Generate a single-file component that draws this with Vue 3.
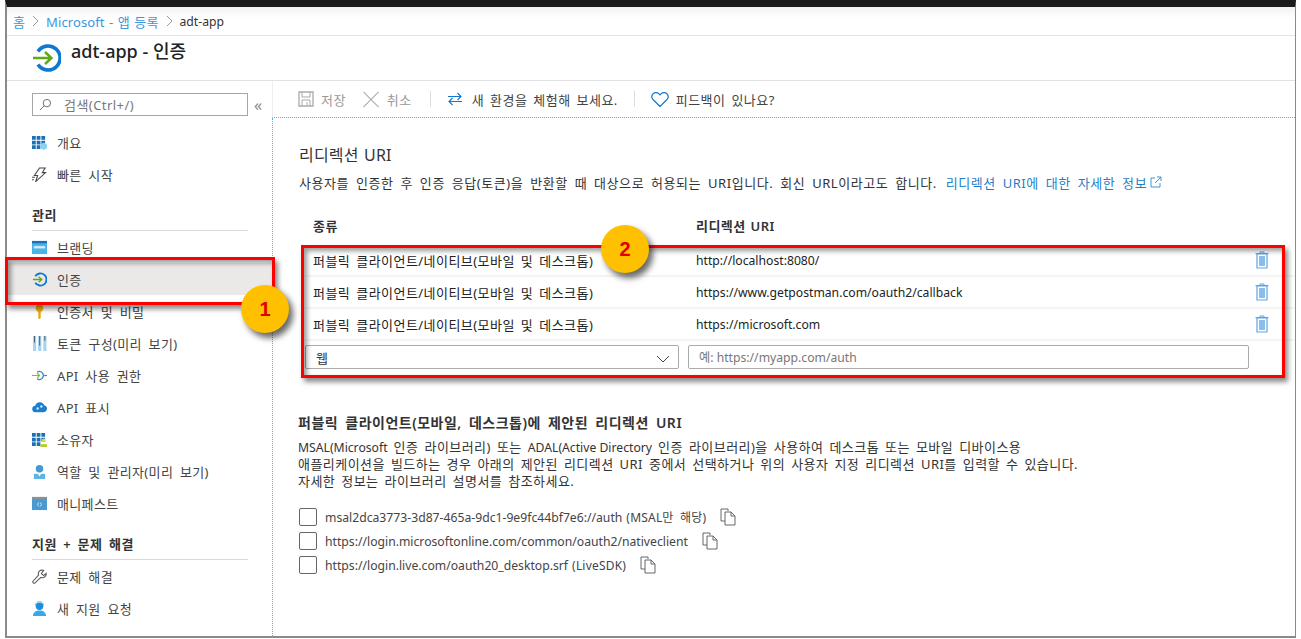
<template>
  <div class="frame">
    <div class="crumbs">
      <a>홈</a>
      <svg class="sep" viewBox="0 0 7 12"><path d="M1 1l5 5-5 5" fill="none" stroke="#999" /></svg>
      <a>Microsoft - 앱 등록</a>
      <svg class="sep" viewBox="0 0 7 12"><path d="M1 1l5 5-5 5" fill="none" stroke="#999" /></svg>
      <span class="en">adt-app</span>
    </div>

    <header class="title-bar">
      <svg class="logo" viewBox="0 0 28 28">
        <path d="M5 7.500A12 12 0 1 1 5 20.500" fill="none" stroke="#0f78d0" stroke-width="3.600" />
        <path d="M0 14h18M12 8l6.500 6-6.500 6" fill="none" stroke="#5ea81b" stroke-width="2.400" />
      </svg>
      <h1>adt-app - 인증</h1>
    </header>

    <div class="body">
      <aside class="sidebar">
        <div class="search-row">
          <div class="search">
            <svg viewBox="0 0 14 14" class="search-icon">
              <circle cx="8.500" cy="5.500" r="4" fill="none" stroke="#666" />
              <path d="M5.600 8.400 1 13" stroke="#666" fill="none" />
            </svg>
            <span>검색(Ctrl+/)</span>
          </div>
          <span class="collapse">«</span>
        </div>

        <template v-for="item in nav" :key="item.label">
          <div v-if="item.group" class="group">{{ item.label }}</div>
          <div v-else class="nav-item" :class="{ active: item.active }">
            <svg class="nav-icon" viewBox="0 0 16 16" v-html="item.icon"></svg>
            <span>{{ item.label }}</span>
          </div>
        </template>
      </aside>

      <main class="main">
        <div class="toolbar">
          <span class="tool disabled">
            <svg viewBox="0 0 16 16" class="tool-icon">
              <path d="M1 1h14v14H1z" fill="none" stroke="#aaa" stroke-width="1.300" />
              <path d="M4 1v5h8V1M4 15v-6h8v6M9 11v3" fill="none" stroke="#aaa" />
            </svg>
            저장
          </span>
          <span class="tool disabled">
            <svg viewBox="0 0 18 18" class="tool-icon wide">
              <path d="M1 1l16 16M17 1 1 17" stroke="#aaa" stroke-width="1.100" fill="none" />
            </svg>
            취소
          </span>
          <i class="tool-sep"></i>
          <span class="tool try">
            <svg viewBox="0 0 16 16" class="tool-icon">
              <path d="M1 5.500h13M10.500 2l3.500 3.500L10.500 9" fill="none" stroke="#0f78d0" stroke-width="1.100" />
              <path d="M15 10.500H2M5.500 7 2 10.500 5.500 14" fill="none" stroke="#0f78d0" stroke-width="1.100" />
            </svg>
            새 환경을 체험해 보세요.
          </span>
          <i class="tool-sep"></i>
          <span class="tool">
            <svg viewBox="0 0 18 16" class="tool-icon wide">
              <path d="M9 15 2 8a4.200 4.200 0 0 1 0-5.600 4.200 4.200 0 0 1 6 0l1 1 1-1a4.200 4.200 0 0 1 6 0 4.200 4.200 0 0 1 0 5.600z" fill="none" stroke="#0f78d0" stroke-width="1.200" />
            </svg>
            피드백이 있나요?
          </span>
        </div>

        <section class="content">
          <h2>리디렉션 URI</h2>
          <p class="intro">
            사용자를 인증한 후 인증 응답(토큰)을 반환할 때 대상으로 허용되는 URI입니다. 회신 URL이라고도 합니다.
            <a>리디렉션 URI에 대한 자세한 정보</a>
            <svg viewBox="0 0 12 12" class="ext">
              <path d="M5 2H1v9h9V7M7 1h4v4M11 1 5 7" fill="none" stroke="#3a96dd" />
            </svg>
          </p>

          <div class="uri-table">
            <div class="uri-head">
              <span class="col-type">종류</span>
              <span class="col-uri">리디렉션 URI</span>
            </div>
            <div v-for="uri in uris" :key="uri" class="uri-row">
              <span class="col-type">퍼블릭 클라이언트/네이티브(모바일 및 데스크톱)</span>
              <span class="col-uri en">{{ uri }}</span>
              <svg class="trash" viewBox="0 0 14 18">
                <path d="M5 2.500V1h4v1.500M0.500 2.500h13" fill="none" stroke="#5ba4e6" />
                <path d="M2 3h10v14H2z" fill="#fff" stroke="#5ba4e6" stroke-width="1.200" />
                <path d="M4 5h6v10H4z" fill="#8cbdea" />
              </svg>
            </div>
            <div class="uri-add">
              <div class="select">
                <span>웹</span>
                <svg viewBox="0 0 14 8" class="chev"><path d="M1 1l6 6 6-6" fill="none" stroke="#444" /></svg>
              </div>
              <div class="input en">예: https://myapp.com/auth</div>
            </div>
          </div>

          <h3>퍼블릭 클라이언트(모바일, 데스크톱)에 제안된 리디렉션 URI</h3>
          <p class="note">
            <span class="en">MSAL(Microsoft</span> 인증 라이브러리) 또는 <span class="en">ADAL(Active Directory</span> 인증 라이브러리)을 사용하여 데스크톱 또는 모바일 디바이스용<br />
            애플리케이션을 빌드하는 경우 아래의 제안된 리디렉션 URI 중에서 선택하거나 위의 사용자 지정 리디렉션 URI를 입력할 수 있습니다.<br />
            자세한 정보는 라이브러리 설명서를 참조하세요.
          </p>

          <div class="suggest">
            <label v-for="s in suggested" :key="s.url" class="suggest-row">
              <i class="check"></i>
              <span class="en">{{ s.url }}</span>
              <small v-if="s.tag">{{ s.tag }}</small>
              <svg class="copy" viewBox="0 0 16 18">
                <path d="M5 13H1V1h7v2" fill="none" stroke="#666" />
                <path d="M5 4h6l4 4v9H5z" fill="#fff" stroke="#666" />
                <path d="M11 4v4h4" fill="none" stroke="#666" />
              </svg>
            </label>
          </div>
        </section>
      </main>
    </div>

    <div class="callout box-one"></div>
    <div class="callout box-two"></div>
    <div class="badge badge-one">1</div>
    <div class="badge badge-two">2</div>
  </div>
</template>

<script setup>
const ring = '<path d="M3.500 4.500a6.500 6.500 0 1 1 0 7" fill="none" stroke="#0f78d0" stroke-width="2"/><path d="M1 8h9M7 5l3.500 3L7 11" fill="none" stroke="#5ea81b" stroke-width="1.400"/>'
const grid = c => `<path d="M0 1h4v4H0zM5 1h4v4H5zM10 1h4v4h-4zM0 6h4v4H0zM5 6h4v4H5zM10 6h4v4h-4zM0 11h4v4H0zM5 11h4v4H5z" fill="#1c70b8"/>${c}`

const nav = [
  { label: '개요', icon: grid('<path d="M9 10l3.500-2 3.500 2v4l-3.500 2L9 14z" fill="#8fd0ee"/>') },
  { label: '빠른 시작', icon: '<path d="M8 1h6l-3 5h3.500L4 15.500 6 9H2.500zM0 11h3M0 13.500h2" fill="none" stroke="#444" stroke-width="1.100"/>' },
  { label: '관리', group: true },
  { label: '브랜딩', icon: '<path d="M0 1h16v14H0z" fill="#4db1ea"/><path d="M0 1h16v2.500H0z" fill="#1a6fb5"/><path d="M2 6.500h12v2.500H2z" fill="#d6effb"/>' },
  { label: '인증', icon: ring, active: true },
  { label: '인증서 및 비밀', icon: '<circle cx="8" cy="4.500" r="4" fill="#f2b411"/><path d="M6.700 7h2.600v8L8 16.500 6.700 15z" fill="#e8a90c"/>' },
  { label: '토큰 구성(미리 보기)', icon: '<path d="M1 0h3.500v16H1zM6.500 0H10v16H6.500zM12 0h3.500v16H12z" fill="#a9d4f0"/><path d="M2.200 0h1v7h-1zM7.700 0h1v10h-1zM13.200 0h1v5h-1z" fill="#4c5a65"/>' },
  { label: 'API 사용 권한', icon: '<path d="M0 8h8M5.500 5.500 8 8l-2.500 2.500" fill="none" stroke="#7fba3a" stroke-width="1.300"/><path d="M5.500 4.500a4.200 4.200 0 1 1 0 7" fill="none" stroke="#2a86cf" stroke-width="1.400"/><path d="M13 8h3" stroke="#2a86cf" stroke-width="1.300"/>' },
  { label: 'API 표시', icon: '<path d="M4 13a3.500 3.500 0 0 1-.5-7 5 5 0 0 1 9.500-.5A3.800 3.800 0 0 1 12.500 13z" fill="#1b7fd0"/><circle cx="6" cy="9" r="1.300" fill="#cfe9fa"/><circle cx="10" cy="7" r="1.300" fill="#cfe9fa"/>' },
  { label: '소유자', icon: grid('<circle cx="12.500" cy="9" r="2" fill="#d3dd35"/><path d="M9 16v-3h7v3z" fill="#b7cc2c"/>') },
  { label: '역할 및 관리자(미리 보기)', icon: '<circle cx="8" cy="5" r="4" fill="#3f9ad6"/><path d="M2 16V10.500h12V16z" fill="#5eb5e3"/><path d="M6 10.500h4L8 13z" fill="#fff"/>' },
  { label: '매니페스트', icon: '<path d="M0 1h16v14H0z" fill="#4b99d1"/><path d="M0 1h16v2.500H0z" fill="#8a9198"/><path d="M7 7 6 9l1 2M9 7l1 2-1 2" fill="none" stroke="#fff" stroke-width=".8"/>' },
  { label: '지원 + 문제 해결', group: true },
  { label: '문제 해결', icon: '<path d="M10.500 1a4 4 0 0 0-3.500 5.500L1 13a1.500 1.500 0 0 0 2 2l6.500-6a4 4 0 0 0 5.500-4.500L12.500 7 10 5l2.500-3.500z" fill="none" stroke="#555" stroke-width="1.100"/>' },
  { label: '새 지원 요청', icon: '<circle cx="8" cy="5.500" r="4" fill="#1e8fdc"/><path d="M1 16c0-4 3-6 7-6s7 2 7 6z" fill="#38a9e8"/><path d="M3.500 5a4.500 4.500 0 0 1 9 0" fill="none" stroke="#6bc7c4"/>' }
]

const uris = [
  'http://localhost:8080/',
  'https://www.getpostman.com/oauth2/callback',
  'https://microsoft.com'
]

const suggested = [
  { url: 'msal2dca3773-3d87-465a-9dc1-9e9fc44bf7e6://auth', tag: '(MSAL만 해당)' },
  { url: 'https://login.microsoftonline.com/common/oauth2/nativeclient' },
  { url: 'https://login.live.com/oauth20_desktop.srf', tag: '(LiveSDK)' }
]
</script>

<style>
html, body { background: #fff; overflow: hidden; }
</style>

<style scoped>
.frame {
  position: relative;
  box-sizing: border-box;
  width: 1291px;
  height: 638px;
  margin-left: 5px;
  border: 2px solid #8a8a8a;
  border-top: 7px solid #1a1a1a;
  border-right-width: 1px;
  font-family: "Noto Sans", "Noto Sans CJK KR", sans-serif;
  font-size: 13px;
  letter-spacing: 0.45px;
  word-spacing: 2.200px;
  color: #333;
  background: #fff;
}

.en {
  font-size: 12.2px;
  letter-spacing: 0;
  word-spacing: 0;
}

.crumbs {
  display: flex;
  align-items: center;
  gap: 7px;
  height: 29px;
  box-sizing: border-box;
  padding-left: 6px;
  border-bottom: 1px solid #e4e4e4;
  background: linear-gradient(#f2f2f2, #fff 40%);
  letter-spacing: 0.1px;
  word-spacing: 1px;
}
.crumbs a { color: #3a96dd; }
.crumbs .sep { width: 7px; height: 12px; }

.title-bar {
  display: flex;
  align-items: center;
  gap: 10px;
  height: 45px;
  padding-left: 26px;
  border-bottom: 1px solid #e2e2e2;
  box-sizing: border-box;
}
.logo { width: 28px; height: 28px; margin-top: -1px; }
h1 {
  margin: -16px 0 0;
  font-size: 18px;
  font-weight: 500;
  letter-spacing: 0;
  word-spacing: 0;
  color: #222;
}

.body {
  display: flex;
  height: 557px;
}

.sidebar {
  box-sizing: border-box;
  flex: 0 0 265px;
  min-width: 0;
  padding-top: 12px;
}
.search-row {
  display: flex;
  align-items: center;
  padding-left: 25px;
  margin-bottom: 10px;
}
.search {
  display: flex;
  align-items: center;
  gap: 12px;
  box-sizing: border-box;
  width: 216px;
  height: 23px;
  padding-left: 6px;
  border: 1px solid #a6a6a6;
  color: #777;
}
.search-icon { width: 13px; height: 13px; }
.collapse { margin-left: 6px; color: #888; font-size: 16px; line-height: 20px; }

.group {
  display: flex;
  align-items: flex-end;
  box-sizing: border-box;
  height: 41px;
  margin-left: 25px;
  padding-bottom: 6px;
  border-bottom: 1px solid #d9d9d9;
  width: 216px;
  font-weight: 600;
  letter-spacing: 0.5px;
  word-spacing: 2.500px;
  color: #333;
}

.nav-item {
  display: flex;
  align-items: center;
  gap: 10px;
  height: 32px;
  padding-left: 25px;
  color: #444;
  box-sizing: border-box;
  letter-spacing: 0.35px;
  word-spacing: 3px;
}
.nav-item.active { background: #ebe9e7; }
.nav-icon { flex: none; width: 15px; height: 15px; }

.main {
  flex: 1;
  min-width: 0;
}

.toolbar {
  display: flex;
  align-items: center;
  gap: 16px;
  box-sizing: border-box;
  height: 37px;
  padding-left: 25px;
  border-left: 1px solid #eee;
  border-bottom: 1px dotted #35bdf0;
  color: #444;
}
.tool { display: flex; align-items: center; gap: 7px; }
.tool.disabled { color: #999; }
.tool.try { gap: 9px; }
.tool-icon { width: 16px; height: 16px; }
.tool-icon.wide { width: 18px; height: 17px; }
.tool-sep { width: 1px; height: 16px; background: #ddd; }
.tool.disabled + .tool-sep { margin-left: 2px; }

.content {
  box-sizing: border-box;
  height: 520px;
  padding: 26px 0 0 26px;
  border-left: 1px dotted #35bdf0;
}
h2 {
  margin: 0;
  font-size: 16px;
  line-height: 22px;
  font-weight: 400;
  letter-spacing: 0.2px;
  word-spacing: 1px;
  color: #333;
}
.intro {
  margin: 7px 0 0;
  line-height: 20px;
  letter-spacing: 0.55px;
  word-spacing: 3px;
  color: #333;
}
.intro a { color: #1f7fc8; margin-left: 2px; }
.ext { width: 12px; height: 12px; margin-left: 3px; }

.uri-table { margin: 12px 0 0 6px; }
.uri-head {
  display: flex;
  align-items: center;
  height: 40px;
  font-weight: 600;
  word-spacing: 1px;
}
.uri-row {
  display: flex;
  align-items: center;
  height: 32px;
  box-sizing: border-box;
  border-bottom: 2px solid #f4f4f4;
  color: #222;
}
.col-type { flex: 0 0 391px; padding-left: 8px; box-sizing: border-box; }
.col-uri { flex: 1; }
.trash { flex: none; width: 14px; height: 18px; margin-right: 26px; }

.uri-add { display: flex; gap: 9px; margin-top: 4px; }
.select, .input {
  display: flex;
  align-items: center;
  box-sizing: border-box;
  height: 24px;
  border: 1px solid #aaa;
  border-radius: 2px;
}
.select {
  justify-content: space-between;
  width: 374px;
  padding: 0 8px 0 10px;
  color: #333;
}
.chev { width: 14px; height: 8px; margin-top: 4px; }
.input { width: 561px; padding-left: 10px; color: #777; }

h3 {
  margin: 44px 0 0 -1px;
  font-size: 14px;
  line-height: 20px;
  font-weight: 600;
  letter-spacing: 0.5px;
  word-spacing: 3px;
  color: #333;
}
.note {
  margin: 6px 0 0 -1px;
  line-height: 17px;
  color: #333;
}

.suggest { display: flex; flex-direction: column; gap: 6px; margin-top: 18px; }
.suggest-row {
  display: flex;
  align-items: center;
  height: 18px;
  color: #444;
}
.suggest-row small { margin-left: 4px; font-size: 12px; letter-spacing: 0.2px; word-spacing: 3px; }
.check {
  flex: none;
  box-sizing: border-box;
  width: 18px;
  height: 18px;
  margin-right: 8px;
  border: 1px solid #666;
  border-radius: 2px;
}
.copy { width: 16px; height: 18px; margin-left: 14px; }

.callout {
  position: absolute;
  box-sizing: border-box;
  border: 3px solid #f00;
  box-shadow: 3px 4px 5px rgba(0, 0, 0, 0.45), inset 3px 3px 5px rgba(0, 0, 0, 0.4);
  pointer-events: none;
}
.box-one { left: -2px; top: 250px; width: 270px; height: 48px; }
.box-two { left: 294px; top: 238px; width: 984px; height: 133px; }

.badge {
  position: absolute;
  display: flex;
  align-items: center;
  justify-content: center;
  width: 48px;
  height: 48px;
  border-radius: 50%;
  background: #ffc000;
  box-shadow: 4px 5px 6px rgba(0, 0, 0, 0.6);
  color: #e00000;
  font: 700 20px "Liberation Sans", sans-serif;
  letter-spacing: 0;
}
.badge-one { left: 234px; top: 278px; }
.badge-two { left: 594px; top: 218px; }
</style>
